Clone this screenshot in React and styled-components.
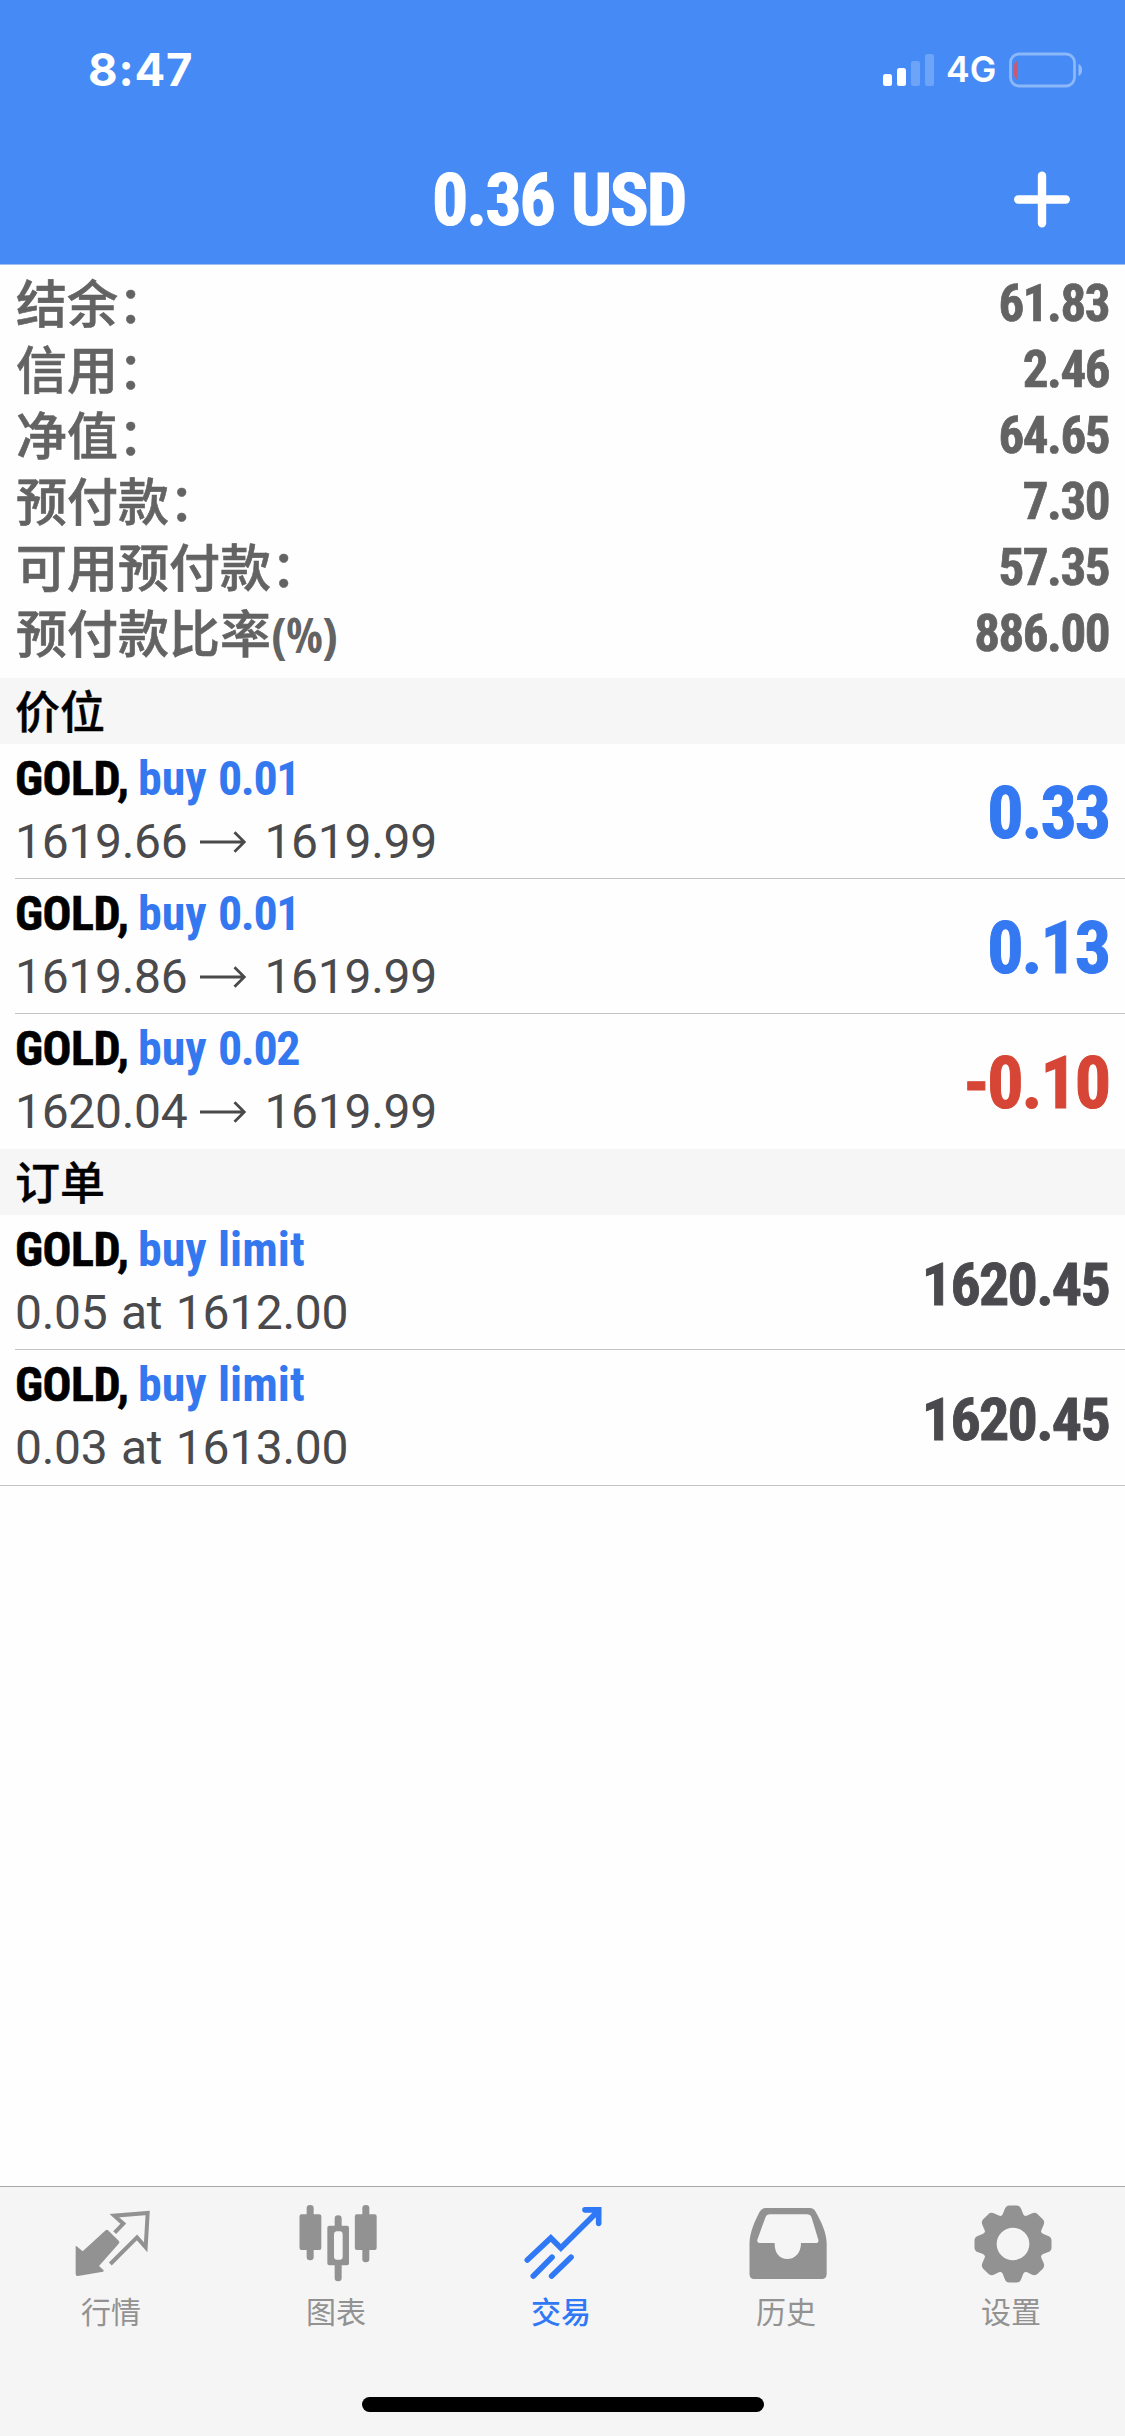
import React from 'react'
import styled, { createGlobalStyle } from 'styled-components';

const GlobalStyle = createGlobalStyle`
  body {
    margin: 0;
    background-color: #fefefe;
  }
  * {
    box-sizing: border-box;
  }
`;

const Screen = styled.div`
    display: flex;
    flex-direction: column;
    width: 1125px;
    height: 2436px;
    overflow: hidden;
    font-family: Roboto, "Noto Sans CJK SC", sans-serif;
    background-color: #fefefe;
`;

const Header = styled.header`
    height: 265px;
    background-color: #468bf5;
    border-bottom: 1px solid #9ebdf0;
    color: #fff;
`;

const StatusBar = styled.div`
    display: flex;
    align-items: center;
    height: 132px;
    padding: 7px 43px 0 88px;
    font-family: Inter, sans-serif;
`;

const Clock = styled.div`
    flex: 1;
    font-size: 45.5px;
    font-weight: 700;
    line-height: 58px;
    letter-spacing: 0.8px;
`;

const Network = styled.div`
    width: 63px;
    margin-left: 12px;
    font-size: 35.5px;
    font-weight: 600;
    line-height: 60px;
    white-space: nowrap;
`;

const NavBar = styled.div`
    display: grid;
    grid-template-columns: 432px 1fr 112px;
    align-items: center;
    height: 132px;
    svg {
      display: block;
    }
`;

const Title = styled.div`
    grid-column: 2;
    display: flex;
    padding-top: 3px;
    font-size: 72px;
    font-weight: 700;
    font-stretch: 75%;
    line-height: 132px;
`;

const Slot = styled.div`
    flex: none;
    width: ${props => props.$width}px;
`;

const Digits = styled.span`
    letter-spacing: -0.029em;
    white-space: nowrap;
    -webkit-text-stroke: 0.014em currentColor;
`;

const Summary = styled.section`
    height: 413px;
    padding: 6px 16px 0 16px;
    color: #636363;
`;

const SummaryRow = styled.div`
    display: flex;
    justify-content: space-between;
    height: 66px;
`;

const SummaryLabel = styled.div`
    height: 66px;
    font-size: 51px;
    font-weight: 500;
    line-height: 69px;
    white-space: nowrap;
    -webkit-text-stroke: 0.6px currentColor;
`;

const Unit = styled.span`
    font-family: "Open Sans", sans-serif;
    font-stretch: 75%;
    font-size: 48px;
    font-weight: 700;
    line-height: 50px;
    -webkit-text-stroke: 0;
`;

const SummaryValue = styled.div`
    font-size: 51px;
    font-weight: 700;
    font-stretch: 75%;
    line-height: 66px;
`;

const SectionTitle = styled.h2`
    height: 66px;
    margin: 0;
    padding-left: 15px;
    background-color: #f6f6f6;
    color: #000;
    font-family: "Noto Sans CJK SC", sans-serif;
    font-size: 45px;
    font-weight: 500;
    line-height: 64px;
    -webkit-text-stroke: 0.4px currentColor;
`;

const Deals = styled.div`
    border-bottom: ${props => props.$closed ? '1px solid #c3c3c5' : 'none'};
`;

const Deal = styled.div`
    display: flex;
    justify-content: space-between;
    height: 135px;
    margin-left: 15px;
    padding-right: 16px;
    border-bottom: 1px solid #c3c3c5;
    &:last-child {
      border-bottom: none;
    }
`;

const DealName = styled.div`
    display: flex;
    font-size: 48px;
    font-weight: 700;
    font-stretch: 75%;
    line-height: 69px;
    color: #3478f0;
`;

const Symbol = styled.span`
    color: #000;
    letter-spacing: -0.5px;
    -webkit-text-stroke: 0.6px currentColor;
`;

const Volume = styled.span`
    letter-spacing: -1.4px;
`;

const DealPrice = styled.div`
    display: flex;
    align-items: center;
    font-size: 48px;
    line-height: 57px;
    letter-spacing: -0.3px;
    word-spacing: 2px;
    color: #4a4a4c;
    svg {
      margin: 0 18px 0 13px;
    }
`;

const DealValue = styled.div`
    padding-top: 4px;
    font-size: ${props => props.$size}px;
    font-weight: 700;
    font-stretch: 75%;
    line-height: 132px;
    height: 134px;
    color: ${props => props.$color};
`;

const TabBar = styled.nav`
    display: grid;
    grid-template-columns: repeat(5, 1fr);
    height: 250px;
    margin-top: auto;
    padding-top: 18px;
    position: relative;
    border-top: 1px solid #a9a9ab;
    background-color: #f5f5f5;
`;

const Tab = styled.div`
    display: flex;
    flex-direction: column;
    align-items: center;
    color: ${props => props.$active ? '#2f78f6' : '#929292'};
`;

const TabLabel = styled.div`
    margin-left: -3px;
    font-family: "Noto Sans CJK SC", sans-serif;
    font-size: 30px;
    line-height: 54px;
    font-weight: ${props => props.$active ? 500 : 400};
`;

const HomeIndicator = styled.div`
    position: absolute;
    bottom: 24px;
    left: 362px;
    width: 402px;
    height: 15px;
    border-radius: 8px;
    background-color: #000;
`;

const SignalIcon = () => (
    <svg width="51" height="34" viewBox="0 0 51 34" fill="#fff">
        <rect x="0" y="21" width="9" height="12" rx="2.5" />
        <rect x="14" y="15" width="9" height="18" rx="2.5" />
        <rect x="28" y="8" width="9" height="25" rx="2.5" opacity="0.22" />
        <rect x="42" y="1" width="9" height="32" rx="2.5" opacity="0.22" />
    </svg>
)

const BatteryIcon = () => (
    <svg width="73" height="36" viewBox="0 0 73 36" fill="none">
        <rect x="1.5" y="2" width="64" height="32" rx="8.5" stroke="#fff" strokeOpacity="0.38" strokeWidth="2.8" />
        <path d="M69.5 12c2.6 1 3.5 3.4 3.5 6s-.9 5-3.5 6z" fill="#fff" fillOpacity="0.42" />
        <path d="M8.5 8.5v19.500c-2.500-1.500-3.500-4-3.500-6v-7.500c0-2 1-4.500 3.500-6z" fill="#c8596f" />
    </svg>
)

const PlusIcon = () => (
    <svg width="58" height="58" viewBox="0 0 58 58" stroke="#fff" strokeWidth="8.4" strokeLinecap="round">
        <path d="M5.200 28.500H52.800M29 4.700V52.300" />
    </svg>
)

const ArrowIcon = () => (
    <svg width="46" height="24" viewBox="0 0 46 24" fill="none" stroke="#4a4a4c" strokeWidth="2.8">
        <path d="M0 12H44M34.500 2.200L44.300 12L34.500 21.800" />
    </svg>
)

const QuotesIcon = () => (
    <svg width="78" height="78" viewBox="0 0 234 234" fill="none">
        <path d="M95 76Q99 73 102 76L134 107Q139 112 134 116L75 183L89 196Q90 199 87 200L12 213Q5 214 5 207V124L7 123L26 139Z" fill="currentColor" />
        <path d="M122 83L148 56L121 32L221 24L215 127L189 97L109 177" stroke="currentColor" strokeWidth="12" />
    </svg>
)

const ChartIcon = () => (
    <svg width="78" height="78" viewBox="0 0 234 234" fill="currentColor">
        <rect x="23" y="0" width="21" height="166" rx="10" />
        <rect x="1.500" y="28" width="65.500" height="107" rx="6" />
        <rect x="190" y="0" width="21" height="172" rx="10" />
        <rect x="167.500" y="28" width="65.500" height="107" rx="6" />
        <rect x="107" y="31" width="21" height="44" rx="10" />
        <rect x="107" y="170" width="21" height="59" rx="10" />
        <path fillRule="evenodd" d="M91 62H144Q150 62 150 68V175Q150 181 144 181H91Q85 181 85 175V68Q85 62 91 62ZM112 79Q105 80 105 88V155Q105 163 112 164H123Q131 163 131 155V88Q131 80 123 79Z" />
    </svg>
)

const TradeIcon = () => (
    <svg width="78" height="78" viewBox="0 0 234 234" fill="none" stroke="currentColor" strokeWidth="17" strokeLinecap="round">
        <path d="M10 165L80.500 99L110.500 129L214 26" />
        <path d="M183 14.500H224V55" strokeLinejoin="miter" />
        <path d="M196 12H226V46Z" fill="currentColor" stroke="none" />
        <path d="M28 213L84 157M83 213L141 157" />
    </svg>
)

const HistoryIcon = () => (
    <svg width="78" height="78" viewBox="0 0 234 234" fill="currentColor">
        <path fillRule="evenodd" d="M50 9H183Q194 9 200 20C218 52 232 82 233 114V207Q233 222 218 222H16Q1.500 222 1.500 207V114C3 82 15 52 32 20Q38 9 50 9ZM63 28Q53 28 49 38L25 104Q23 114 32 114H77C76 144 92 162 115 162S156 144 156 114H200Q210 114 208 104L188 38Q184 28 173 28Z" />
    </svg>
)

const tooth = 'M-38 -78Q-29 -90 -25 -104Q-21 -115.500 -11 -115.500H11Q21 -115.500 25 -104Q29 -90 38 -78Z';

const SettingsIcon = () => (
    <svg width="78" height="78" viewBox="-117 -117 234 234" fill="currentColor">
        <path fillRule="evenodd" d="M-92 0A92 92 0 1 1 92 0A92 92 0 1 1 -92 0ZM-49 0A49 49 0 1 0 49 0A49 49 0 1 0 -49 0Z" />
        {[0, 45, 90, 135, 180, 225, 270, 315].map(angle => (
            <path key={angle} d={tooth} transform={`rotate(${angle})`} />
        ))}
    </svg>
)

const summary = [
    { label: '结余：', value: '61.83' },
    { label: '信用：', value: '2.46' },
    { label: '净值：', value: '64.65' },
    { label: '预付款：', value: '7.30' },
    { label: '可用预付款：', value: '57.35' },
    { label: '预付款比率', unit: '(%)', value: '886.00' },
];

const positions = [
    { volume: '0.01', open: '1619.66', current: '1619.99', profit: '0.33' },
    { volume: '0.01', open: '1619.86', current: '1619.99', profit: '0.13' },
    { volume: '0.02', open: '1620.04', current: '1619.99', profit: '-0.10' },
];

const orders = [
    { detail: '0.05 at 1612.00', price: '1620.45' },
    { detail: '0.03 at 1613.00', price: '1620.45' },
];

const tabs = [
    { label: '行情', Icon: QuotesIcon },
    { label: '图表', Icon: ChartIcon },
    { label: '交易', Icon: TradeIcon, active: true },
    { label: '历史', Icon: HistoryIcon },
    { label: '设置', Icon: SettingsIcon },
];

const App = () => {
    return (
        <Screen>
            <GlobalStyle />
            <Header>
                <StatusBar>
                    <Clock>8:47</Clock>
                    <SignalIcon />
                    <Network>4G</Network>
                    <BatteryIcon />
                </StatusBar>
                <NavBar>
                    <Title>
                        <Slot $width={139}><Digits>0.36</Digits></Slot>
                        <Digits>USD</Digits>
                    </Title>
                    <PlusIcon />
                </NavBar>
            </Header>
            <Summary>
                {summary.map(({ label, unit, value }) => (
                    <SummaryRow key={label}>
                        <SummaryLabel>{label}{unit && <Unit>{unit}</Unit>}</SummaryLabel>
                        <SummaryValue><Digits>{value}</Digits></SummaryValue>
                    </SummaryRow>
                ))}
            </Summary>
            <SectionTitle>价位</SectionTitle>
            <Deals>
                {positions.map(item => (
                    <Deal key={item.open}>
                        <div>
                            <DealName>
                                <Slot $width={123}><Symbol>GOLD,</Symbol></Slot>
                                <Slot $width={80}>buy</Slot>
                                <Volume>{item.volume}</Volume>
                            </DealName>
                            <DealPrice>{item.open} <ArrowIcon /> {item.current}</DealPrice>
                        </div>
                        <DealValue $size={72} $color={item.profit < 0 ? '#d64535' : '#3478f2'}>
                            <Digits>{item.profit}</Digits>
                        </DealValue>
                    </Deal>
                ))}
            </Deals>
            <SectionTitle>订单</SectionTitle>
            <Deals $closed>
                {orders.map(item => (
                    <Deal key={item.detail}>
                        <div>
                            <DealName>
                                <Slot $width={123}><Symbol>GOLD,</Symbol></Slot>
                                <Slot $width={80}>buy</Slot>
                                <span>limit</span>
                            </DealName>
                            <DealPrice>{item.detail}</DealPrice>
                        </div>
                        <DealValue $size={60} $color="#4a4a4e">
                            <Digits>{item.price}</Digits>
                        </DealValue>
                    </Deal>
                ))}
            </Deals>
            <TabBar>
                {tabs.map(({ label, Icon, active }) => (
                    <Tab key={label} $active={active}>
                        <Icon />
                        <TabLabel $active={active}>{label}</TabLabel>
                    </Tab>
                ))}
                <HomeIndicator />
            </TabBar>
        </Screen>
    )
}

export default App
